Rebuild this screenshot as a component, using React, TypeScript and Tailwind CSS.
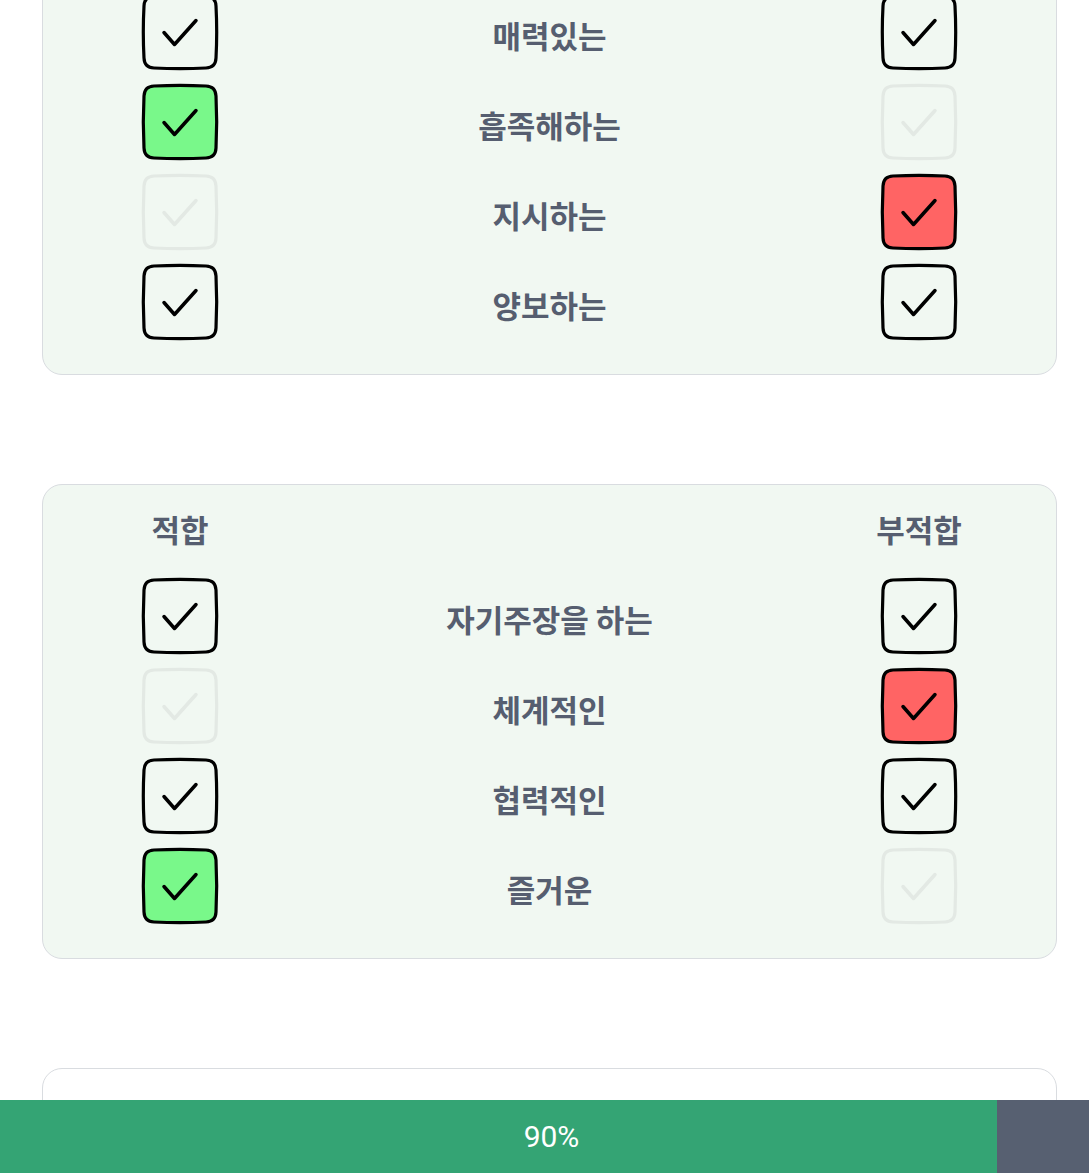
import React from "react";

type Mark = "on" | "off" | "good" | "bad";

interface RowProps {
  label: string;
  left: Mark;
  right: Mark;
}

const firstCard: RowProps[] = [
  { label: "매력있는", left: "on", right: "on" },
  { label: "흡족해하는", left: "good", right: "off" },
  { label: "지시하는", left: "off", right: "bad" },
  { label: "양보하는", left: "on", right: "on" },
];

const secondCard: RowProps[] = [
  { label: "자기주장을 하는", left: "on", right: "on" },
  { label: "체계적인", left: "off", right: "bad" },
  { label: "협력적인", left: "on", right: "on" },
  { label: "즐거운", left: "good", right: "off" },
];

const boxPath =
  "M12 2 Q38 0.6 64 2 Q73.6 2.4 74 12 Q75.4 38 74 64 Q73.6 73.6 64 74 Q38 75.4 12 74 Q2.4 73.6 2 64 Q0.6 38 2 12 Q2.4 2.4 12 2 Z";

const CheckBox = ({ mark }: { mark: Mark }) => {
  const fill = mark === "good" ? "#79f88a" : mark === "bad" ? "#ff6464" : "none";
  const stroke = mark === "off" ? "#e3e9e4" : "#000000";
  return (
    <svg width="76" height="76" viewBox="0 0 76 76" className="block overflow-visible">
      <path d={boxPath} fill={fill} stroke={stroke} strokeWidth="3.2" strokeLinejoin="round" />
      <path
        d="M22 38.5 L32.5 50.5 L54 26.5"
        fill="none"
        stroke={stroke}
        strokeWidth="3.5"
        strokeLinecap="round"
        strokeLinejoin="round"
      />
    </svg>
  );
};

const Card = ({ rows }: { rows: RowProps[] }) => (
  <div className="ml-[42px] mr-[32px] rounded-[20px] border border-[#d9dce0] bg-[#f1f8f2] px-[62px] pt-[30px] pb-[34px]">
    <div className="flex h-[28px] items-center text-[31px] leading-[28px] font-semibold text-[#565e70]">
      <div className="w-[150px] text-center">적합</div>
      <div className="flex-1" />
      <div className="w-[150px] text-center">부적합</div>
    </div>
    <div className="mt-[35px] flex flex-col gap-[14px]">
      {rows.map((row, i) => (
        <div key={i} className="flex items-center">
          <div className="flex w-[150px] justify-center">
            <CheckBox mark={row.left} />
          </div>
          <div className="flex-1 pt-[4px] text-center text-[31px] leading-[31px] font-semibold text-[#565e70]">
            {row.label}
          </div>
          <div className="flex w-[150px] justify-center">
            <CheckBox mark={row.right} />
          </div>
        </div>
      ))}
    </div>
  </div>
);

export default function App() {
  return (
    <div
      className="min-h-screen overflow-hidden bg-white"
      style={{ fontFamily: '"Noto Sans CJK KR", "Noto Sans", sans-serif' }}
    >
      <div className="-mt-[100px] flex flex-col gap-[109px] pb-[200px]">
        <Card rows={firstCard} />
        <Card rows={secondCard} />
        <div className="ml-[42px] mr-[32px] h-[400px] rounded-[20px] border border-[#d9dce0] bg-white" />
      </div>

      <div className="fixed bottom-0 left-0 right-0 flex h-[73px]">
        <div className="flex w-[997px] items-center justify-center bg-[#34a474] pl-[106px] text-[30px] text-white [font-family:Roboto,sans-serif]">
          90%
        </div>
        <div className="flex-1 bg-[#576071]" />
      </div>
    </div>
  );
}
